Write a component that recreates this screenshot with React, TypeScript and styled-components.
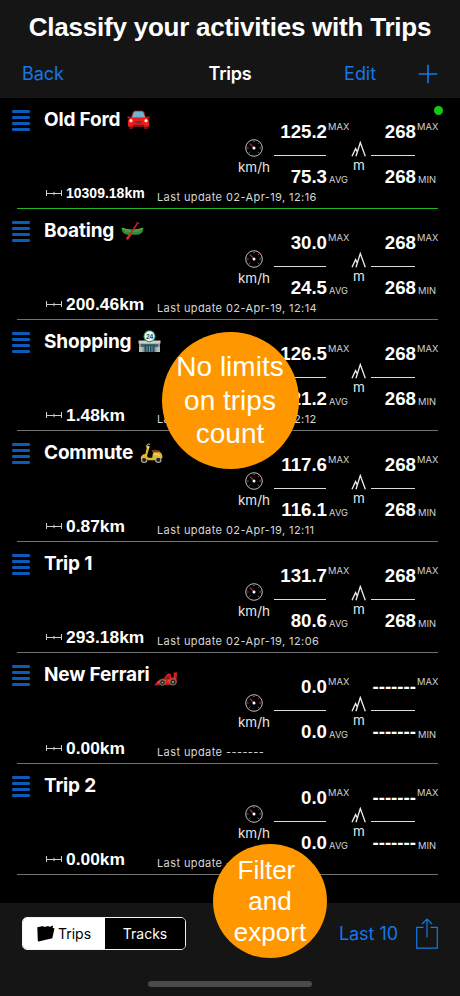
import React from "react";
import styled, { createGlobalStyle } from "styled-components";

const GlobalStyle = createGlobalStyle`
  body { margin: 0; background: #000; }
  * { box-sizing: border-box; }
`;

const UI = `"Inter", "Liberation Sans", sans-serif`;
const HELV = `"Liberation Sans", Arial, sans-serif`;
const BLUE = "#1478e6";

const Screen = styled.div`
  position: relative;
  width: 460px;
  height: 996px;
  overflow: hidden;
  background: #000;
  color: #fff;
  font-family: ${UI};
  display: flex;
  flex-direction: column;
`;

const Header = styled.header`
  height: 98px;
  flex: none;
  background: #151515;
`;

const Headline = styled.h1`
  margin: 0;
  height: 52px;
  padding-top: 11px;
  font: 700 26px/32px ${HELV};
  letter-spacing: -0.23px;
  text-align: center;
  white-space: nowrap;
`;

const NavBar = styled.nav`
  height: 44px;
  padding: 0 22px;
  display: grid;
  grid-template-columns: 1fr auto 1fr;
  align-items: center;
`;

const NavTitle = styled.span`
  margin-top: -1px;
  font-size: 18px;
  font-weight: 600;
  letter-spacing: -0.2px;
`;

const NavActions = styled.div`
  display: flex;
  justify-content: flex-end;
  align-items: center;
  gap: 42px;
`;

const TextButton = styled.button`
  border: 0;
  padding: 0;
  background: none;
  color: ${BLUE};
  font: 400 18px/22px ${UI};
  letter-spacing: -0.05px;
  text-align: left;
  white-space: nowrap;
`;

const IconButton = styled.button`
  border: 0;
  padding: 0;
  background: none;
  color: ${BLUE};
  display: flex;
`;

const List = styled.main`
  flex: 1;
`;

const Row = styled.article<{ $active?: boolean }>`
  position: relative;
  height: 111px;
  margin: 0 22px 0 17px;
  border-bottom: 1px solid ${(p) => (p.$active ? "#22b322" : "#727272")};
`;

const RowTop = styled.div`
  height: 91px;
  display: grid;
  grid-template-columns: 27px 191px 39px 53px 23px 21px 45px 22px;
`;

const Handle = styled.div`
  margin: 12px 0 0 -5px;
  width: 18px;
  display: flex;
  flex-direction: column;
  gap: 3.4px;
`;

const HandleBar = styled.i`
  height: 2.6px;
  border-radius: 1.3px;
  background: #0a5cb8;
`;

const Name = styled.h2`
  margin: 0;
  padding-top: 9px;
  height: 34px;
  display: flex;
  align-items: center;
  gap: 7px;
  font-size: 19px;
  line-height: 24px;
  font-weight: 650;
  letter-spacing: -0.18px;
  white-space: nowrap;
`;

const Unit = styled.div<{ $gap: number; $top: number; $pull?: number }>`
  padding-top: ${(p) => p.$top}px;
  margin-left: ${(p) => -(p.$pull ?? 0)}px;
  display: flex;
  flex-direction: column;
  align-items: center;
  gap: ${(p) => p.$gap}px;
  font-size: 13.5px;
  line-height: 16px;
  color: #e6e6e6;
`;

const Values = styled.div`
  padding-top: 21px;
  display: flex;
  flex-direction: column;
`;

const Value = styled.span<{ $lower?: boolean }>`
  display: flex;
  justify-content: flex-end;
  height: ${(p) => (p.$lower ? "33px" : "36px")};
  padding-top: ${(p) => (p.$lower ? "9px" : "1px")};
  font: 700 18.7px/24px ${HELV};
  white-space: nowrap;
`;

const Divider = styled.i`
  height: 1px;
  margin-right: 1px;
  background: #dcdcdc;
`;

const Tags = styled.div`
  padding: 22px 0 0 1px;
  display: flex;
  flex-direction: column;
  gap: 39px;
  font-size: 9.3px;
  line-height: 14px;
  letter-spacing: 0.1px;
  color: #d2d2d2;
`;

const LowerTag = styled.span`
  padding-left: 1px;
`;

const RowFooter = styled.footer`
  height: 19px;
  margin-top: -5px;
  display: grid;
  grid-template-columns: 18px 93px 69px auto;
  padding-left: 29px;
`;

const Distance = styled.span<{ $small?: boolean }>`
  margin-top: -1px;
  padding-left: 2px;
  font: 700 ${(p) => (p.$small ? "14px" : "17.4px")}/20px ${HELV};
  white-space: nowrap;
`;

const Update = styled.span`
  padding-top: 4px;
  font-size: 11px;
  line-height: 18px;
  letter-spacing: 0.4px;
  color: #d6d6d6;
  white-space: nowrap;
`;

const ActiveDot = styled.i`
  position: absolute;
  right: -5px;
  top: 8px;
  width: 9px;
  height: 9px;
  border-radius: 50%;
  background: #12c812;
`;

const Callout = styled.div<{ $x: number; $y: number; $d: number; $font: number; $line: number }>`
  position: absolute;
  left: ${(p) => p.$x}px;
  top: ${(p) => p.$y}px;
  width: ${(p) => p.$d}px;
  height: ${(p) => p.$d}px;
  border-radius: 50%;
  background: #ff9800;
  display: flex;
  flex-direction: column;
  align-items: center;
  justify-content: center;
  font: 400 ${(p) => p.$font}px/${(p) => p.$line}px ${HELV};
  white-space: pre;
`;

const Toolbar = styled.footer`
  height: 93px;
  flex: none;
  background: #151515;
  display: flex;
  flex-direction: column;
  align-items: center;
  justify-content: space-between;
  padding-bottom: 9px;
`;

const ToolbarRow = styled.div`
  width: 100%;
  padding: 14px 22px 0;
  display: flex;
  align-items: center;
`;

const Segmented = styled.div`
  width: 164px;
  height: 33px;
  border: 1px solid #f2f2f2;
  border-radius: 5px;
  overflow: hidden;
  display: grid;
  grid-template-columns: 82px 1fr;
  margin-right: auto;
`;

const Segment = styled.button<{ $on?: boolean }>`
  border: 0;
  padding: 0;
  display: flex;
  align-items: center;
  justify-content: center;
  gap: 3px;
  background: ${(p) => (p.$on ? "#fff" : "#000")};
  color: ${(p) => (p.$on ? "#000" : "#fff")};
  font: 400 14px/18px ${UI};
`;

const ShareSlot = styled.div`
  margin-left: 18px;
  display: flex;
`;

const HomeIndicator = styled.i`
  width: 164px;
  height: 6px;
  border-radius: 3px;
  background: #4a4a4a;
`;

const Gauge = () => (
  <svg width="18" height="18" viewBox="0 0 18 18" fill="none">
    <circle cx="9" cy="9" r="8.3" stroke="#bdbdbd" strokeWidth="1" />
    <path d="M9 2v1M2.3 9h1.2M14.5 9h1.2M4.4 13.6l.8-.8M13.6 13.6l-.8-.8" stroke="#bbb" strokeWidth=".8" />
    <path d="M13.2 4.8l.9-.8M15 8.2l.7-.2" stroke="#d22" strokeWidth="1" />
    <path d="M9 9L5 4.6" stroke="#c0343c" strokeWidth="1.1" />
    <circle cx="9" cy="9" r="1.5" fill="#fff" />
  </svg>
);

const Peaks = () => (
  <svg width="16" height="16" viewBox="0 0 16 16" fill="none" stroke="#eee" strokeWidth="1.3">
    <path d="M1 15.300L4.600 7.600L6.300 11M5 15.300L9.300 1.500L14.300 15.300" />
  </svg>
);

const Span = () => (
  <svg width="16" height="18" viewBox="0 0 16 18" fill="none" stroke="#ccc" strokeWidth="1">
    <path d="M.5 6v6M15.500 6v6M.5 9.500h15M8 7.800v3.400" />
  </svg>
);

const Car = () => (
  <svg width="23" height="20" viewBox="0 0 23 20">
    <path d="M4 8L5.900 2.300Q6.500.7 8.200.7h6.600q1.700 0 2.300 1.600L19 8z" fill="#c9302a" />
    <path d="M4.900 7.800L6.700 2.700Q7.100 1.400 8.400 1.400h6.200q1.300 0 1.700 1.300l1.800 5.100z" fill="#6eb6cd" />
    <path d="M.5 6.600h3v2h-3zM19.500 6.600h3v2h-3z" fill="#b71a18" />
    <path d="M2 15h4v4H3q-1 0-1-1zM17 15h4v3q0 1-1 1h-3z" fill="#7a1216" />
    <path d="M3.400 7.400h16.200q2.400 1.300 2.400 4v5.200H1v-5.200q0-2.700 2.400-4z" fill="#ef1c1c" />
    <path d="M7.500 10.900h8l-1.200 2.500H8.700z" fill="#65383a" />
    <path d="M6 14.800h11v1.700H6z" fill="#7b1717" />
    <circle cx="4" cy="10.700" r="1.600" fill="#ffe9df" />
    <circle cx="19" cy="10.700" r="1.600" fill="#ffe9df" />
  </svg>
);

const Canoe = () => (
  <svg width="23" height="20" viewBox="0 0 23 20">
    <path d="M.5 6.800Q11 11 22.500 6.800Q22 13.800 16 13.800H7Q1 13.800.5 6.800z" fill="#26913a" />
    <path d="M2.500 8.400Q11.500 11.800 20.500 8.400L19 10.200Q11.500 12.400 4 10.200z" fill="#a5732e" />
    <path d="M1 7.200Q11 11.200 22 7.200" fill="none" stroke="#54bd4e" strokeWidth="1" />
    <path d="M17 1.500L7.500 15.500" stroke="#c0282d" strokeWidth="1.400" />
    <path d="M8.700 12.300l1.700 1.600-3.200 4.500q-1 .7-1.700-.1t0-1.800z" fill="#dc2830" />
    <path d="M15.500 1.300l2.600 1.300" stroke="#a12228" strokeWidth="1.300" />
  </svg>
);

const Store = () => (
  <svg width="23" height="23" viewBox="0 0 23 23">
    <path d="M1 11.500h21V22H1z" fill="#8b9a9e" />
    <path d="M.5 10.500h22v3h-22z" fill="#c9d0ce" />
    <path d="M3 14h17v3H3z" fill="#44646a" />
    <path d="M6.500 15h10v7h-10z" fill="#244c5c" />
    <path d="M9 16v6M11.500 16v6M14 16v6" stroke="#88bfc8" strokeWidth=".7" />
    <path d="M1 17h3.500v5H1zM18.500 17H22v5h-3.500z" fill="#b5bfbd" />
    <circle cx="11.500" cy="6.200" r="6" fill="#42936d" />
    <circle cx="11.500" cy="6.200" r="4.900" fill="#f3fbf5" />
    <text x="11.500" y="8.600" textAnchor="middle" fontFamily="Liberation Sans" fontWeight="700" fontSize="6.600" fill="#244a43">24</text>
  </svg>
);

const Scooter = () => (
  <svg width="23" height="22" viewBox="0 0 23 22">
    <circle cx="4.200" cy="17.800" r="2.700" fill="#222" stroke="#aaa" strokeWidth="1.200" />
    <circle cx="18.300" cy="17.800" r="2.700" fill="#222" stroke="#aaa" strokeWidth="1.200" />
    <path d="M7.400 3.400Q10 3.800 9 7L7.200 13q-.3 2.600 2 2.700h3l.7-4.500q.3-1.400 2-1.400h4.600q3 1.600 3 6.200h-3.300q-3-.8-4 2.300H8.200q-3-3.600-7.700-1.800Q1.400 12 5.300 12z" fill="#e2b62d" />
    <path d="M11.600 8.200q4-1.200 8.200.4v1.700h-7.600z" fill="#7b3b1f" />
    <path d="M6 4.300l2.200-2.500 2 .8" fill="none" stroke="#999" strokeWidth="1.100" />
    <path d="M6.600 4.200l2.900-.1-.5 2.700-2.500-.7z" fill="#f6d556" />
    <path d="M14 12.500q3-1.200 5.500 1" fill="none" stroke="#fae077" strokeWidth="1" />
  </svg>
);

const RaceCarArt = styled.svg`
  margin-top: 8px;
  margin-left: -3px;
`;

const RaceCar = () => (
  <RaceCarArt width="24" height="14" viewBox="0 0 25 15">
    <path d="M1 12.500l4.500-4.500 5-1.300L13 3l2-1.500 2.400.5.600 4h2.500l.4-3-.4-2.500h4l-.8 7 .5 4-6.200 2.100H1z" fill="#d8201f" />
    <path d="M12.500 5l3.100-1 1.200 3-4.700 1z" fill="#8e1c1c" />
    <path d="M3 11l9-2M15 9.500l5-.5" stroke="#ff6a57" strokeWidth=".9" />
    <circle cx="8.700" cy="11.300" r="3" fill="#292722" stroke="#877b6b" strokeWidth="1" />
    <circle cx="20" cy="10.700" r="3.400" fill="#292722" stroke="#877b6b" strokeWidth="1" />
    <circle cx="8.700" cy="11.300" r=".9" fill="#aaa08f" />
    <circle cx="20" cy="10.700" r="1.100" fill="#aaa08f" />
    <path d="M.3 13.700h5" stroke="#b81b1b" strokeWidth="1.400" />
  </RaceCarArt>
);

const Folder = () => (
  <svg width="18" height="17" viewBox="0 0 18 17">
    <path d="M.3 2.200L6 1l1 1.100L11.500 1l.8 1L16 .6l-.3 2.300 1.800.4-2.200 9.900L1.600 16.600.8 16z" fill="#000" />
  </svg>
);

const Plus = () => (
  <svg width="20" height="20" viewBox="0 0 20 20" stroke="currentColor" strokeWidth="1.600">
    <path d="M10 .7v18.600M.7 10h18.600" />
  </svg>
);

const Share = () => (
  <svg width="22" height="31" viewBox="0 0 22 31" fill="none" stroke="currentColor" strokeWidth="1.200">
    <path d="M7.500 9.300H.7v20.800h20.600V9.300h-6.800M11 19.500V1M6 6l5-5 5 5" />
  </svg>
);

interface Trip {
  name: string;
  art?: React.ReactNode;
  distance: string;
  updated: string;
  max: string;
  avg: string;
  altitude: string;
  active?: boolean;
}

const NONE = "-------";

const trips: Trip[] = [
  { name: "Old Ford", art: <Car />, distance: "10309.18km", updated: "02-Apr-19, 12:16", max: "125.2", avg: "75.3", altitude: "268", active: true },
  { name: "Boating", art: <Canoe />, distance: "200.46km", updated: "02-Apr-19, 12:14", max: "30.0", avg: "24.5", altitude: "268" },
  { name: "Shopping", art: <Store />, distance: "1.48km", updated: "02-Apr-19, 12:12", max: "126.5", avg: "121.2", altitude: "268" },
  { name: "Commute", art: <Scooter />, distance: "0.87km", updated: "02-Apr-19, 12:11", max: "117.6", avg: "116.1", altitude: "268" },
  { name: "Trip 1", distance: "293.18km", updated: "02-Apr-19, 12:06", max: "131.7", avg: "80.6", altitude: "268" },
  { name: "New Ferrari", art: <RaceCar />, distance: "0.00km", updated: NONE, max: "0.0", avg: "0.0", altitude: NONE },
  { name: "Trip 2", distance: "0.00km", updated: NONE, max: "0.0", avg: "0.0", altitude: NONE },
];

const Metric = ({ upper, lower, tag }: { upper: string; lower: string; tag: string }) => (
  <>
    <Values>
      <Value>{upper}</Value>
      <Divider />
      <Value $lower>{lower}</Value>
    </Values>
    <Tags>
      <span>MAX</span>
      <LowerTag>{tag}</LowerTag>
    </Tags>
  </>
);

const TripRow = ({ trip }: { trip: Trip }) => (
  <Row $active={trip.active}>
    {trip.active && <ActiveDot />}
    <RowTop>
      <Handle>
        <HandleBar />
        <HandleBar />
        <HandleBar />
        <HandleBar />
      </Handle>
      <Name>
        {trip.name}
        {trip.art}
      </Name>
      <Unit $top={41} $gap={2} $pull={1}>
        <Gauge />
        km/h
      </Unit>
      <Metric upper={trip.max} lower={trip.avg} tag="AVG" />
      <Unit $top={43} $gap={0} $pull={3}>
        <Peaks />
        m
      </Unit>
      <Metric upper={trip.altitude} lower={trip.altitude} tag="MIN" />
    </RowTop>
    <RowFooter>
      <Span />
      <Distance $small={trip.distance.length > 8}>{trip.distance}</Distance>
      <Update>Last update</Update>
      <Update>{trip.updated}</Update>
    </RowFooter>
  </Row>
);

export default function App() {
  return (
    <>
      <GlobalStyle />
      <Screen>
        <Header>
          <Headline>Classify your activities with Trips</Headline>
          <NavBar>
            <TextButton>Back</TextButton>
            <NavTitle>Trips</NavTitle>
            <NavActions>
              <TextButton>Edit</TextButton>
              <IconButton aria-label="Add trip">
                <Plus />
              </IconButton>
            </NavActions>
          </NavBar>
        </Header>
        <List>
          {trips.map((trip) => (
            <TripRow key={trip.name} trip={trip} />
          ))}
        </List>
        <Toolbar>
          <ToolbarRow>
            <Segmented>
              <Segment $on>
                <Folder />
                Trips
              </Segment>
              <Segment>Tracks</Segment>
            </Segmented>
            <TextButton>Last 10</TextButton>
            <ShareSlot>
              <IconButton aria-label="Share">
                <Share />
              </IconButton>
            </ShareSlot>
          </ToolbarRow>
          <HomeIndicator />
        </Toolbar>
        <Callout $x={161.5} $y={332} $d={137} $font={28} $line={33.4}>
          <span>No limits</span>
          <span>on trips</span>
          <span>count</span>
        </Callout>
        <Callout $x={213} $y={844} $d={114} $font={26} $line={31}>
          <span>{"Filter "}</span>
          <span>and</span>
          <span>export</span>
        </Callout>
      </Screen>
    </>
  );
}
